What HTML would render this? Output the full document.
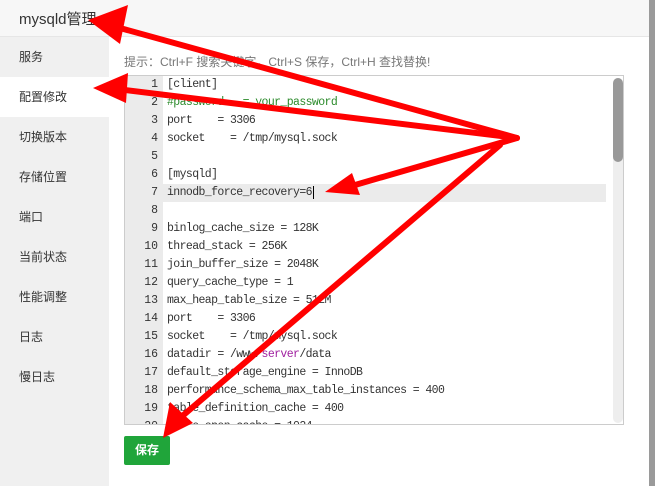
<!DOCTYPE html>
<html><head><meta charset="utf-8"><style>
*{margin:0;padding:0;box-sizing:border-box}
body{width:655px;height:486px;overflow:hidden;background:#fff;font-family:"Liberation Sans","Noto Sans CJK SC",sans-serif;position:relative}
.hdr{position:absolute;left:0;top:0;width:649px;height:37px;background:#f7f7f7;border-bottom:1px solid #e6e6e6;font-size:15px;color:#333;padding:8px 0 0 19px}
.side{position:absolute;left:0;top:37px;width:109px;height:449px;background:#f0f0f0}
.side div{height:40px;line-height:40px;padding-left:19px;font-size:12px;color:#333}
.side .act{background:#fff}
.strip{position:absolute;left:649px;top:0;width:6px;height:486px;background:#9a9a9a}
.hint{position:absolute;left:124px;top:53px;font-size:12px;color:#777}
.ed{position:absolute;left:124px;top:75px;width:500px;height:350px;border:1px solid #ccc;background:#fff;overflow:hidden}
.gut{position:absolute;left:0;top:0;width:38px;height:100%;background:#ebebeb}
.ln{position:absolute;left:0;width:100%;height:18px;font-family:"Liberation Mono","DejaVu Sans Mono",monospace;font-size:10.5px;line-height:18px;white-space:pre;color:#333}
.ln .n{display:inline-block;width:33px;text-align:right;color:#333;font-size:11.5px}
.ln .t{position:absolute;left:42px;font-size:11.5px;letter-spacing:-0.6px}
.cur{background:#ebebeb;width:481px}
.sb{position:absolute;left:488px;top:2px;width:10px;height:345px;background:#eee;border-radius:5px}
.sb i{display:block;height:84px;background:#999;border-radius:5px}
.btn{position:absolute;left:124px;top:436px;width:46px;height:29px;background:#20a53a;border-radius:2px;color:#fff;font-size:12px;font-weight:bold;text-align:center;line-height:29px}
</style></head><body>
<div class="hdr">mysqld管理</div>
<div class="side"><div>服务</div><div class="act">配置修改</div><div>切换版本</div><div>存储位置</div><div>端口</div><div>当前状态</div><div>性能调整</div><div>日志</div><div>慢日志</div></div>
<div class="strip"></div>
<div class="hint">提示：Ctrl+F 搜索关键字，Ctrl+S 保存，Ctrl+H 查找替换!</div>
<div class="ed"><div class="gut"></div>
<div class="ln" style="top:0"><span class="n">1</span><span class="t">[client]</span></div>
<div class="ln" style="top:18px"><span class="n">2</span><span class="t" style="color:#2a8a2a">#password   = your_password</span></div>
<div class="ln" style="top:36px"><span class="n">3</span><span class="t">port    = 3306</span></div>
<div class="ln" style="top:54px"><span class="n">4</span><span class="t">socket    = /tmp/mysql.sock</span></div>
<div class="ln" style="top:72px"><span class="n">5</span></div>
<div class="ln" style="top:90px"><span class="n">6</span><span class="t">[mysqld]</span></div>
<div class="ln cur" style="top:108px"><span class="n">7</span><span class="t">innodb_force_recovery=6<span style="border-left:1px solid #000;margin-left:1px"></span></span></div>
<div class="ln" style="top:126px"><span class="n">8</span></div>
<div class="ln" style="top:144px"><span class="n">9</span><span class="t">binlog_cache_size = 128K</span></div>
<div class="ln" style="top:162px"><span class="n">10</span><span class="t">thread_stack = 256K</span></div>
<div class="ln" style="top:180px"><span class="n">11</span><span class="t">join_buffer_size = 2048K</span></div>
<div class="ln" style="top:198px"><span class="n">12</span><span class="t">query_cache_type = 1</span></div>
<div class="ln" style="top:216px"><span class="n">13</span><span class="t">max_heap_table_size = 512M</span></div>
<div class="ln" style="top:234px"><span class="n">14</span><span class="t">port    = 3306</span></div>
<div class="ln" style="top:252px"><span class="n">15</span><span class="t">socket    = /tmp/mysql.sock</span></div>
<div class="ln" style="top:270px"><span class="n">16</span><span class="t">datadir = /www/<span style="color:#a020a0">server</span>/data</span></div>
<div class="ln" style="top:288px"><span class="n">17</span><span class="t">default_storage_engine = InnoDB</span></div>
<div class="ln" style="top:306px"><span class="n">18</span><span class="t">performance_schema_max_table_instances = 400</span></div>
<div class="ln" style="top:324px"><span class="n">19</span><span class="t">table_definition_cache = 400</span></div>
<div class="ln" style="top:342px"><span class="n">20</span><span class="t">table_open_cache = 1024</span></div>
<div class="sb"><i></i></div>
</div>
<div class="btn">保存</div>
<svg width="655" height="486" style="position:absolute;left:0;top:0">
<g stroke="#f00" stroke-width="6" stroke-linecap="round" fill="none">
<line x1="517" y1="138" x2="120" y2="28"/>
<line x1="517" y1="138" x2="125" y2="90"/>
<line x1="517" y1="138" x2="355" y2="185"/>
<line x1="500" y1="145" x2="180" y2="418"/>
</g>
<g fill="#f00">
<polygon points="88,20 128,5 120,44"/>
<polygon points="93,88 128,73 126,103"/>
<polygon points="325,192 352,173 360,195"/>
<polygon points="163,438 170,402 193,423"/>
</g>
</svg>
</body></html>
